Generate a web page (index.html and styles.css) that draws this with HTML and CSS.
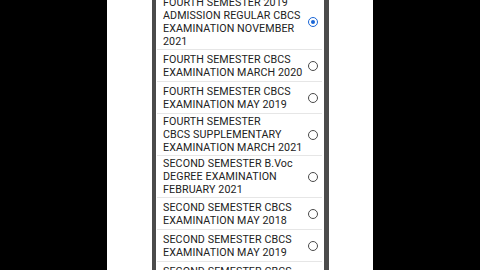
FILE: index.html
```html
<!DOCTYPE html>
<html>
<head>
<meta charset="utf-8">
<link rel="stylesheet" href="styles.css">
</head>
<body>
<div class="stage">
  <div class="phone">
    <div class="list">
      <div class="row first">
        <div class="label">FOURTH SEMESTER 2019<br>ADMISSION REGULAR CBCS<br>EXAMINATION NOVEMBER<br>2021</div>
        <span class="radio on"></span>
      </div>
      <div class="row">
        <div class="label">FOURTH SEMESTER CBCS<br>EXAMINATION MARCH 2020</div>
        <span class="radio"></span>
      </div>
      <div class="row">
        <div class="label">FOURTH SEMESTER CBCS<br>EXAMINATION MAY 2019</div>
        <span class="radio"></span>
      </div>
      <div class="row">
        <div class="label">FOURTH SEMESTER<br>CBCS SUPPLEMENTARY<br>EXAMINATION MARCH 2021</div>
        <span class="radio"></span>
      </div>
      <div class="row">
        <div class="label">SECOND SEMESTER B.Voc<br>DEGREE EXAMINATION<br>FEBRUARY 2021</div>
        <span class="radio"></span>
      </div>
      <div class="row">
        <div class="label">SECOND SEMESTER CBCS<br>EXAMINATION MAY 2018</div>
        <span class="radio"></span>
      </div>
      <div class="row">
        <div class="label">SECOND SEMESTER CBCS<br>EXAMINATION MAY 2019</div>
        <span class="radio"></span>
      </div>
      <div class="row">
        <div class="label">SECOND SEMESTER CBCS<br>EXAMINATION MAY 2020</div>
        <span class="radio"></span>
      </div>
    </div>
  </div>
</div>
</body>
</html>
```
FILE: styles.css
```css
html, body {
  margin: 0;
  padding: 0;
  background: #000;
  height: 270px;
  overflow: hidden;
}
.stage {
  width: 266px;
  margin-left: 107px;
  height: 270px;
  background: #fff;
  padding: 0 44px 0 45px;
  box-sizing: border-box;
}
.phone {
  height: 270px;
  border-left: 4px solid #4b4b4b;
  border-right: 5px solid #4b4b4b;
  background: #fff;
  overflow: hidden;
}
.list {
  margin-top: -5px;
}
.row {
  display: flex;
  align-items: center;
  justify-content: space-between;
  box-sizing: border-box;
  min-height: 32px;
  padding: 1px 4px 1px 6px;
  border-bottom: 1px solid #e6e6e6;
  margin: 0 2px 0 1px;
}
.label {
  font-family: Roboto, "Liberation Sans", sans-serif;
  font-size: 10.7px;
  line-height: 13px;
  color: #222;
  letter-spacing: 0.1px;
}
.radio {
  width: 10px;
  height: 10px;
  box-sizing: border-box;
  border: 1.3px solid #4a4a4a;
  border-radius: 50%;
  flex: none;
  position: relative;
}
.radio.on {
  border-color: #1a66d6;
}
.radio.on::after {
  content: "";
  position: absolute;
  left: 1.7px;
  top: 1.7px;
  width: 4px;
  height: 4px;
  border-radius: 50%;
  background: #1a66d6;
}
```
